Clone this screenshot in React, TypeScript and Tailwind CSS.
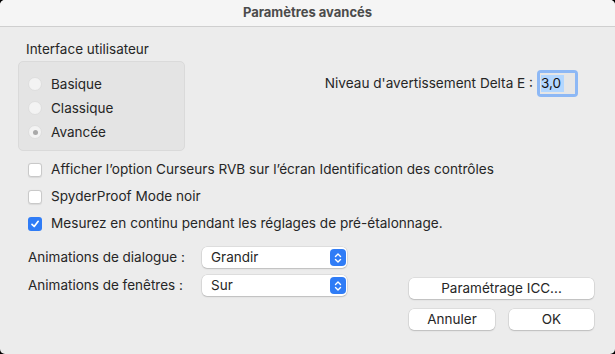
import React from "react";

const font = { fontFamily: "Inter, 'Liberation Sans', sans-serif" };

function Radio({ label, checked }: { label: string; checked?: boolean }) {
  return (
    <div className="flex h-6 items-center gap-[9px]">
      <span className="flex h-[14px] w-[14px] items-center justify-center rounded-full border border-[#dedede] bg-[#f3f3f3]">
        {checked && <span className="h-[5px] w-[5px] rounded-full bg-[#a9a9a9]" />}
      </span>
      <span className="text-[13.5px] text-[#262626]">{label}</span>
    </div>
  );
}

function Checkbox({ label, checked }: { label: string; checked?: boolean }) {
  return (
    <div className="flex h-[27px] items-center gap-[9px]">
      {checked ? (
        <span className="flex h-[14px] w-[14px] items-center justify-center rounded-[3px] bg-[#2f7cf6]">
          <svg width="10" height="10" viewBox="0 0 10 10">
            <path d="M2 5.3 L4.2 7.5 L8.2 2.3" fill="none" stroke="white" strokeWidth="1.7" strokeLinecap="round" strokeLinejoin="round" />
          </svg>
        </span>
      ) : (
        <span className="h-[14px] w-[14px] rounded-[3px] border border-[#c9c9c9] bg-white shadow-[0_0.5px_1px_rgba(0,0,0,0.08)]" />
      )}
      <span className="text-[13.6px] text-[#262626]">{label}</span>
    </div>
  );
}

function Select({ value }: { value: string }) {
  return (
    <div className="flex h-[21px] w-[145px] items-center justify-between rounded-[5px] bg-white pl-[9px] pr-[1px] shadow-[0_0_0_0.5px_rgba(0,0,0,0.12),0_1px_1.5px_rgba(0,0,0,0.15)]">
      <span className="text-[13.5px] text-[#262626]">{value}</span>
      <span className="flex h-[17px] w-[16px] items-center justify-center rounded-[4px] bg-[#2f7cf6]">
        <svg width="8" height="12" viewBox="0 0 8 12">
          <path d="M1.5 4.5 L4 2 L6.5 4.5 M1.5 7.5 L4 10 L6.5 7.5" fill="none" stroke="white" strokeWidth="1.4" strokeLinecap="round" strokeLinejoin="round" />
        </svg>
      </span>
    </div>
  );
}

function Button({ label, w }: { label: string; w: string }) {
  return (
    <div className={`flex h-[21px] ${w} items-center justify-center rounded-[5px] bg-white text-[13.5px] text-[#262626] shadow-[0_0_0_0.5px_rgba(0,0,0,0.12),0_1px_1.5px_rgba(0,0,0,0.15)]`}>
      {label}
    </div>
  );
}

export default function App() {
  return (
    <div className="h-[354px] w-[615px] bg-black" style={font}>
      <div className="flex h-full w-full flex-col overflow-hidden rounded-[5px] bg-[#ececec]">
        <div className="flex h-[27px] shrink-0 items-center justify-center border-b border-[#cfcfcf] bg-[#f5f5f5]">
          <span className="text-[13px] font-bold text-[#4b4b4b]">Paramètres avancés</span>
        </div>

        <div className="flex pt-[14px]">
          <div className="flex w-[185px] flex-col pl-[18px]">
            <span className="h-4 pl-[8px] text-[13.5px] leading-4 text-[#262626]">Interface utilisateur</span>
            <div className="mt-[4px] flex h-[90px] w-[167px] flex-col rounded-[5px] border border-[#dadada] bg-[#e4e4e4] pl-[9px] pt-[10px]">
              <Radio label="Basique" />
              <Radio label="Classique" />
              <Radio label="Avancée" checked />
            </div>
          </div>
          <div className="flex flex-1 items-start justify-end pr-[37px] pt-[29px]">
            <div className="flex items-center gap-[4px]">
              <span className="text-[13.6px] text-[#262626]">Niveau d'avertissement Delta E :</span>
              <div className="h-[27px] w-[41px] rounded-[4px] bg-[#8db8f5] p-[3px]">
                <div className="flex h-full w-full items-center bg-[#e6e6e6] pl-[1px]">
                  <span className="bg-[#b3d7ff] pr-[3px] text-[13.5px] leading-[17px] text-[#111]">3,0</span>
                </div>
              </div>
            </div>
          </div>
        </div>

        <div className="mt-[5px] flex flex-col pl-[28px]">
          <Checkbox label="Afficher l’option Curseurs RVB sur l’écran Identification des contrôles" />
          <Checkbox label="SpyderProof Mode noir" />
          <Checkbox label="Mesurez en continu pendant les réglages de pré-étalonnage." checked />
        </div>

        <div className="mt-[9px] flex pl-[28px] pr-[21px]">
          <div className="flex w-[319px] flex-col gap-[7px] pt-[1px]">
            <div className="flex items-center">
              <span className="w-[174px] text-[13.5px] text-[#262626]">Animations de dialogue :</span>
              <Select value="Grandir" />
            </div>
            <div className="flex items-center">
              <span className="w-[174px] text-[13.5px] text-[#262626]">Animations de fenêtres :</span>
              <Select value="Sur" />
            </div>
          </div>
          <div className="ml-auto flex flex-col gap-[10px] pt-[32px]">
            <Button label="Paramétrage ICC..." w="w-[185px]" />
            <div className="flex justify-between">
              <Button label="Annuler" w="w-[86px]" />
              <Button label="OK" w="w-[85px]" />
            </div>
          </div>
        </div>
      </div>
    </div>
  );
}
